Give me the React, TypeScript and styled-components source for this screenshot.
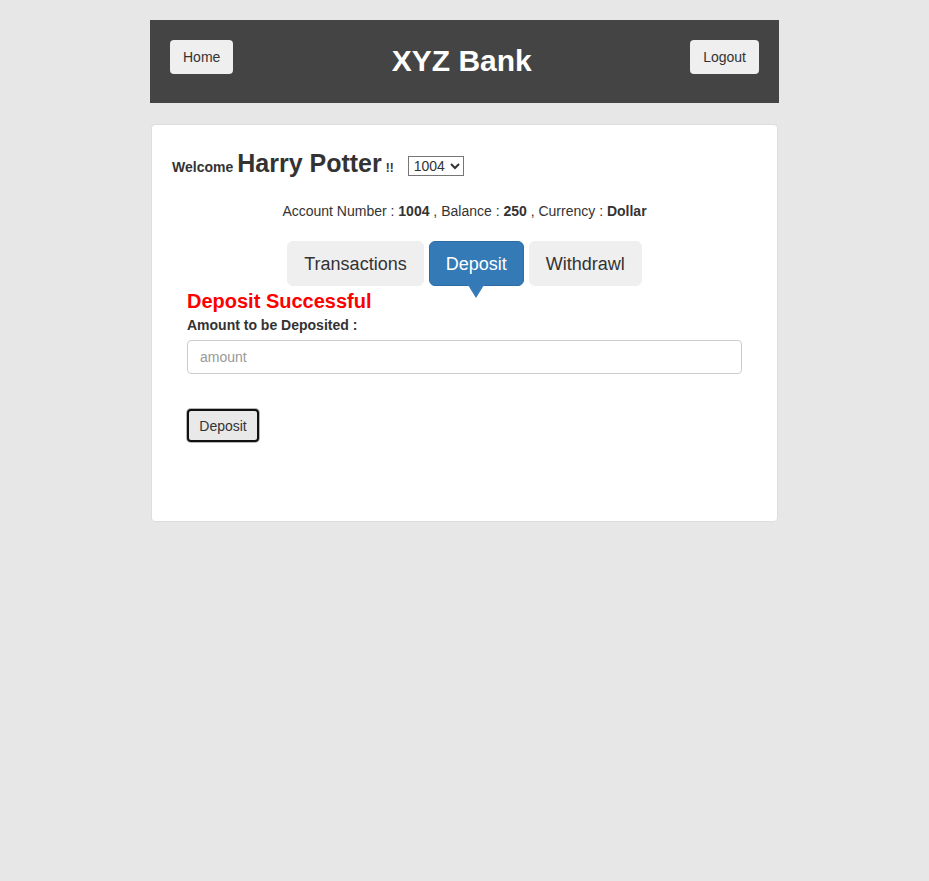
import React from "react";
import styled, { createGlobalStyle } from "styled-components";

const Global = createGlobalStyle`
  html, body { margin: 0; padding: 0; background: #e7e7e7; }
  body { font-family: "Liberation Sans", Arial, sans-serif; color: #333; font-size: 14px; }
  * { box-sizing: border-box; }
`;

const Page = styled.div`
  width: 629px;
  margin: 20px auto 0;
`;

const Header = styled.header`
  height: 83px;
  background: #444;
  display: flex;
  align-items: center;
  justify-content: space-between;
  padding: 0 20px;
`;

const NavButton = styled.button`
  height: 34px;
  padding: 0 13px;
  margin-top: -9px;
  background: #efefef;
  border: none;
  border-radius: 4px;
  font-family: inherit;
  font-size: 14px;
  color: #333;
`;

const Title = styled.h1`
  margin: 0;
  margin-top: -2px;
  color: #fff;
  font-size: 30px;
  font-weight: bold;
`;

const Panel = styled.section`
  margin: 21px 1px 0;
  background: #fff;
  border: 1px solid #ddd;
  border-radius: 4px;
  padding: 24px 35px 79px;
`;

const WelcomeRow = styled.div`
  display: flex;
  align-items: baseline;
  margin-left: -15px;
  font-weight: bold;
  height: 32px;
`;

const Small = styled.strong`
  font-size: 14px;
`;

const Big = styled.span`
  font-size: 25px;
  margin: 0 4px;
`;

const Tiny = styled.span`
  font-size: 12px;
`;

const AccountSelect = styled.select`
  margin-left: 14px;
  font-family: inherit;
  font-size: 14px;
  font-weight: normal;
  color: #333;
  height: 20px;
  border: 1px solid #767676;
  border-radius: 0;
  background: #fff;
  padding: 0 1px;
  align-self: center;
  position: relative;
  top: 1px;
`;

const InfoLine = styled.div`
  text-align: center;
  margin-top: 20px;
  line-height: 20px;
`;

const Tabs = styled.nav`
  display: flex;
  justify-content: center;
  gap: 5px;
  margin-top: 20px;
  margin-left: -35px;
  margin-right: -35px;
`;

const Tab = styled.button<{ $active?: boolean }>`
  position: relative;
  height: 45px;
  padding: 2px 16px 0;
  border-radius: 6px;
  border: 1px solid ${(p) => (p.$active ? "#2e6da4" : "#efefef")};
  background: ${(p) => (p.$active ? "#337ab7" : "#efefef")};
  color: ${(p) => (p.$active ? "#fff" : "#333")};
  font-family: inherit;
  font-size: 18px;

  ${(p) =>
    p.$active &&
    `
    &::after {
      content: "";
      position: absolute;
      left: 50%;
      top: 100%;
      transform: translateX(-50%);
      border-left: 8px solid transparent;
      border-right: 8px solid transparent;
      border-top: 13px solid #337ab7;
    }
  `}
`;

const Success = styled.div`
  color: #f00;
  font-size: 20px;
  font-weight: bold;
  line-height: 28px;
  margin-top: 1px;
`;

const Label = styled.label`
  display: block;
  font-weight: bold;
  line-height: 20px;
  margin-top: 0;
`;

const Input = styled.input`
  display: block;
  width: 100%;
  height: 34px;
  margin-top: 5px;
  padding: 6px 12px;
  border: 1px solid #ccc;
  border-radius: 4px;
  font-family: inherit;
  font-size: 14px;
  color: #555;
  &::placeholder { color: #999; }
`;

const Submit = styled.button`
  margin-top: 35px;
  width: 72px;
  height: 33px;
  padding: 0;
  background: #e9e9e9;
  border: 2px solid #111;
  border-radius: 4px;
  box-shadow: 0 0 0 1px #b5b5b5;
  font-family: inherit;
  font-size: 14px;
  color: #333;
`;

export default function App() {
  return (
    <>
      <Global />
      <Page>
        <Header>
          <NavButton>Home</NavButton>
          <Title>XYZ Bank</Title>
          <NavButton>Logout</NavButton>
        </Header>
        <Panel>
          <WelcomeRow>
            <Small>Welcome</Small>
            <Big>Harry Potter</Big>
            <Tiny>!!</Tiny>
            <AccountSelect defaultValue="1004">
              <option value="1004">1004</option>
              <option value="1005">1005</option>
              <option value="1006">1006</option>
            </AccountSelect>
          </WelcomeRow>
          <InfoLine>
            Account Number : <strong>1004</strong> , Balance : <strong>250</strong> , Currency : <strong>Dollar</strong>
          </InfoLine>
          <Tabs>
            <Tab>Transactions</Tab>
            <Tab $active>Deposit</Tab>
            <Tab>Withdrawl</Tab>
          </Tabs>
          <Success>Deposit Successful</Success>
          <Label>Amount to be Deposited :</Label>
          <Input type="number" placeholder="amount" />
          <Submit>Deposit</Submit>
        </Panel>
      </Page>
    </>
  );
}
